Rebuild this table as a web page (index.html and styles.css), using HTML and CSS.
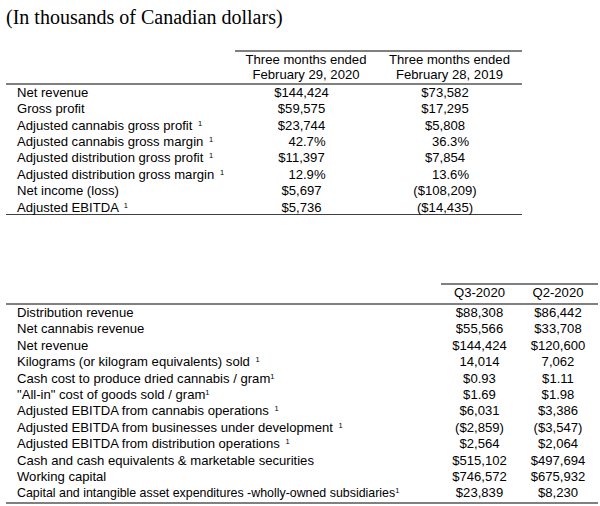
FILE: index.html
```html
<!DOCTYPE html>
<html lang="en">
<head>
<meta charset="utf-8">
<title>Financial highlights</title>
<link rel="stylesheet" href="styles.css">
</head>
<body>
<div class="page">
  <h1 class="title">(In thousands of Canadian dollars)</h1>

  <table class="fin t1">
    <colgroup><col class="c-label"><col class="c-a"><col class="c-b"></colgroup>
    <thead>
      <tr>
        <th class="blank"></th>
        <th class="hd">Three months ended<br>February 29, 2020</th>
        <th class="hd">Three months ended<br>February 28, 2019</th>
      </tr>
    </thead>
    <tbody>
      <tr><td class="lbl">Net revenue</td><td class="val">$144,424</td><td class="val">$73,582</td></tr>
      <tr><td class="lbl">Gross profit</td><td class="val">$59,575</td><td class="val">$17,295</td></tr>
      <tr><td class="lbl">Adjusted cannabis gross profit <sup class="note sp">1</sup></td><td class="val">$23,744</td><td class="val">$5,808</td></tr>
      <tr><td class="lbl">Adjusted cannabis gross margin <sup class="note sp">1</sup></td><td class="val pct">42.7%</td><td class="val pct">36.3%</td></tr>
      <tr><td class="lbl">Adjusted distribution gross profit <sup class="note sp">1</sup></td><td class="val">$11,397</td><td class="val">$7,854</td></tr>
      <tr><td class="lbl">Adjusted distribution gross margin <sup class="note sp">1</sup></td><td class="val pct">12.9%</td><td class="val pct">13.6%</td></tr>
      <tr><td class="lbl">Net income (loss)</td><td class="val">$5,697</td><td class="val">($108,209)</td></tr>
      <tr class="last"><td class="lbl">Adjusted EBITDA <sup class="note sp">1</sup></td><td class="val">$5,736</td><td class="val">($14,435)</td></tr>
    </tbody>
  </table>

  <table class="fin t2">
    <colgroup><col class="c-label"><col class="c-a"><col class="c-b"></colgroup>
    <thead>
      <tr>
        <th class="blank"></th>
        <th class="hd">Q3-2020</th>
        <th class="hd">Q2-2020</th>
      </tr>
    </thead>
    <tbody>
      <tr><td class="lbl">Distribution revenue</td><td class="val">$88,308</td><td class="val">$86,442</td></tr>
      <tr><td class="lbl">Net cannabis revenue</td><td class="val">$55,566</td><td class="val">$33,708</td></tr>
      <tr><td class="lbl">Net revenue</td><td class="val">$144,424</td><td class="val">$120,600</td></tr>
      <tr><td class="lbl">Kilograms (or kilogram equivalents) sold <sup class="note sp">1</sup></td><td class="val">14,014</td><td class="val">7,062</td></tr>
      <tr><td class="lbl">Cash cost to produce dried cannabis / gram<sup class="note">1</sup></td><td class="val">$0.93</td><td class="val">$1.11</td></tr>
      <tr><td class="lbl">"All-in" cost of goods sold / gram<sup class="note">1</sup></td><td class="val">$1.69</td><td class="val">$1.98</td></tr>
      <tr><td class="lbl">Adjusted EBITDA from cannabis operations <sup class="note sp">1</sup></td><td class="val">$6,031</td><td class="val">$3,386</td></tr>
      <tr><td class="lbl">Adjusted EBITDA from businesses under development <sup class="note sp">1</sup></td><td class="val">($2,859)</td><td class="val">($3,547)</td></tr>
      <tr><td class="lbl">Adjusted EBITDA from distribution operations <sup class="note sp">1</sup></td><td class="val">$2,564</td><td class="val">$2,064</td></tr>
      <tr><td class="lbl">Cash and cash equivalents &amp; marketable securities</td><td class="val">$515,102</td><td class="val">$497,694</td></tr>
      <tr><td class="lbl">Working capital</td><td class="val">$746,572</td><td class="val">$675,932</td></tr>
      <tr class="last"><td class="lbl shrink">Capital and intangible asset expenditures -wholly-owned subsidiaries<sup class="note">1</sup></td><td class="val">$23,839</td><td class="val">$8,230</td></tr>
    </tbody>
  </table>
</div>
</body>
</html>
```

FILE: styles.css
```css
html, body {
  margin: 0;
  padding: 0;
  background: #ffffff;
}

body {
  font-family: "Liberation Sans", Arial, sans-serif;
  font-size: 13.1px;
  color: #000000;
}

.page {
  padding: 6px 0 0 6px;
}

.title {
  margin: 0;
  font-family: "Liberation Serif", "Times New Roman", serif;
  font-weight: normal;
  font-size: 20px;
  line-height: 22px;
}

.fin {
  border-collapse: separate;
  border-spacing: 0;
  table-layout: fixed;
}

.fin th,
.fin td {
  padding: 0;
  font-weight: normal;
  white-space: nowrap;
  line-height: 16.35px;
  vertical-align: top;
}

.fin thead th {
  border-bottom: 2px solid #808080;
}

.fin .hd {
  border-top: 2px solid #808080;
  text-align: center;
}

.fin .lbl {
  text-align: left;
  padding-left: 11px;
}

.fin .lbl.shrink {
  font-size: 12.4px;
}

.fin .val {
  text-align: center;
}

.note {
  font-size: 7.5px;
  line-height: 0;
  vertical-align: 4px;
}

.note.sp {
  margin-left: 2px;
}

/* First table */
.t1 {
  width: 516px;
  margin-top: 22px;
}

.t1 .c-label { width: 229px; }
.t1 .c-a { width: 142px; }
.t1 .c-b { width: 145px; }

.t1 .hd {
  line-height: 15px;
  padding-bottom: 1px;
}

.t1 .val {
  padding-right: 9px;
}

.t1 .val.pct {
  padding-right: 0;
  padding-left: 2px;
}

.t1 .last td {
  line-height: 13px;
  padding-top: 1.5px;
  border-bottom: 1px solid #404040;
}

/* Second table */
.t2 {
  width: 592px;
  margin-top: 68px;
}

.t2 .c-label { width: 435px; }
.t2 .c-a { width: 77px; }
.t2 .c-b { width: 80px; }

.t2 .hd {
  line-height: 16px;
  padding-bottom: 2px;
}

.t2 td {
  line-height: 16.4px;
}

.t2 .last td {
  border-bottom: 2px solid #808080;
}
```
